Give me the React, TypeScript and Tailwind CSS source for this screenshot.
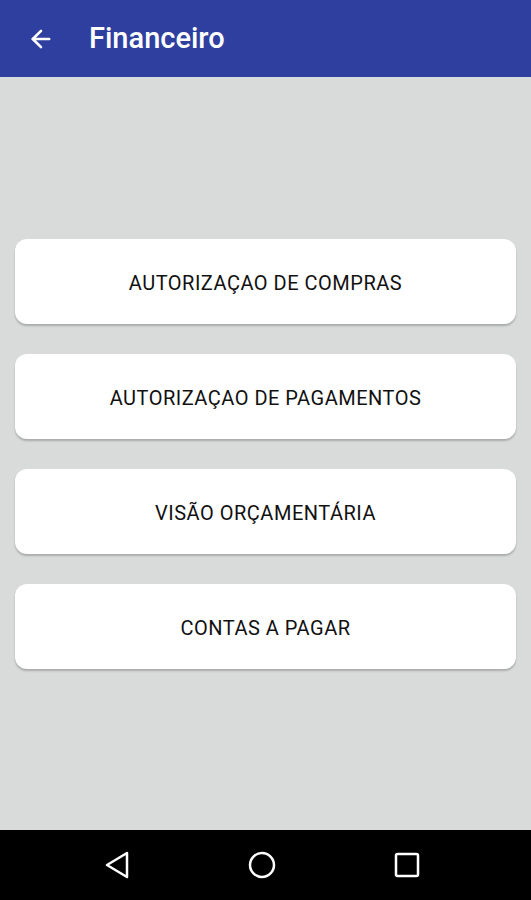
import { ArrowLeft } from 'lucide-react';

const items = [
  'AUTORIZAÇAO DE COMPRAS',
  'AUTORIZAÇAO DE PAGAMENTOS',
  'VISÃO ORÇAMENTÁRIA',
  'CONTAS A PAGAR',
];

export default function App() {
  return (
    <div className="flex h-[900px] w-[531px] flex-col bg-[#d9dbda] font-['Roboto',sans-serif]">
      <header className="flex h-[77px] shrink-0 items-center bg-[#2f3f9f] pl-[27px]">
        <ArrowLeft className="h-[28px] w-[28px] text-white" strokeWidth={2.25} />
        <h1 className="ml-[34px] text-[29px] font-medium text-white">Financeiro</h1>
      </header>

      <main className="flex flex-1 flex-col gap-[30px] px-[15px] pt-[162px]">
        {items.map((label) => (
          <button
            key={label}
            className="flex h-[85px] items-center justify-center rounded-[12px] bg-white pt-[2px] text-[20px] font-normal tracking-[0.5px] text-[#111] shadow-[0_2px_2px_rgba(0,0,0,0.22)]"
          >
            {label}
          </button>
        ))}
      </main>

      <nav className="flex h-[70px] shrink-0 items-center gap-[85px] bg-black pl-[87px]">
        <div className="flex w-[60px] justify-center">
          <svg width="26" height="30" viewBox="0 0 26 30" fill="none" stroke="white" strokeWidth="2.5" strokeLinejoin="round">
            <path d="M23 3 L3 15 L23 27 Z" />
          </svg>
        </div>
        <div className="flex w-[60px] justify-center">
          <svg width="28" height="28" viewBox="0 0 28 28" fill="none" stroke="white" strokeWidth="2.5">
            <circle cx="14" cy="14" r="12" />
          </svg>
        </div>
        <div className="flex w-[60px] justify-center">
          <svg width="26" height="26" viewBox="0 0 26 26" fill="none" stroke="white" strokeWidth="2.5">
            <rect x="2" y="2" width="22" height="22" rx="1.5" />
          </svg>
        </div>
      </nav>
    </div>
  );
}
